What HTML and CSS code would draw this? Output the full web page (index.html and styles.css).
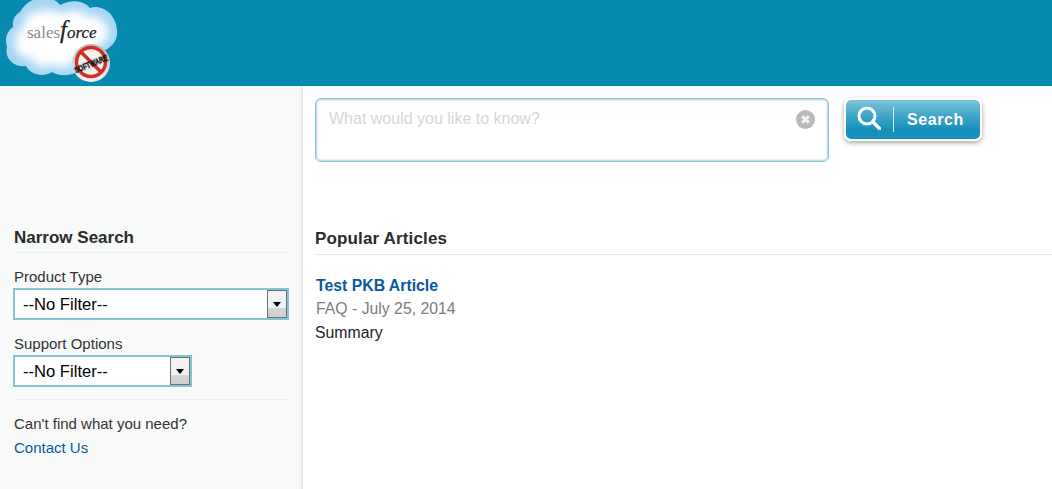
FILE: index.html
```html
<!DOCTYPE html>
<html lang="en">
<head>
    <meta charset="UTF-8">
    <title>Knowledge Search</title>
    <link rel="stylesheet" href="styles.css">
</head>
<body>

<header class="top">
    <svg class="logo" width="124" height="86" viewBox="0 0 124 86" xmlns="http://www.w3.org/2000/svg">
        <defs>
            <filter id="soft" x="-20%" y="-20%" width="140%" height="140%">
                <feGaussianBlur stdDeviation="4"/>
            </filter>
            <filter id="smudge" x="-10%" y="-30%" width="120%" height="160%">
                <feGaussianBlur stdDeviation="0.35"/>
            </filter>
            <clipPath id="cloudClip">
                <path d="M20 12C30 -6 52 -6 60 5C70 -1 84 0 90 8C102 4 116 14 117 30C118 40 112 47 105 50C104 60 96 66 85 64C78 76 62 78 52 72C42 78 30 74 26 66C14 68 4 58 7 47C4 38 8 30 13 27C12 20 15 15 20 12Z"/>
            </clipPath>
            <linearGradient id="badge" x1="0" y1="0" x2="0" y2="1">
                <stop offset="0" stop-color="#bdb8b1"/>
                <stop offset="1" stop-color="#f3f1ee"/>
            </linearGradient>
        </defs>
        <g clip-path="url(#cloudClip)">
            <rect width="124" height="86" fill="#a6d6f2"/>
            <path d="M24 20C34 8 52 8 62 14C70 9 82 9 88 17C98 14 108 22 108 33C108 41 102 44 97 45C95 54 86 58 78 56C72 68 60 70 52 64C44 70 34 66 32 58C22 60 14 52 16 44C13 36 18 30 24 28Z" fill="#fff" filter="url(#soft)"/>
        </g>
        <text class="logo-name" x="27" y="38"><tspan class="logo-sales">sales</tspan><tspan class="logo-f">f</tspan><tspan class="logo-force">orce</tspan></text>
        <circle cx="91" cy="63" r="19" fill="url(#badge)"/>
        <circle cx="91" cy="62" r="14.5" fill="#f4f1ee" stroke="#cf2f28" stroke-width="3.4"/>
        <path d="M81 52L101 72" stroke="#cf2f28" stroke-width="3.4"/>
        <text class="logo-soft" x="91" y="67" textLength="35" lengthAdjust="spacingAndGlyphs" transform="rotate(-22 91 64)" filter="url(#smudge)">SOFTWARE</text>
    </svg>
</header>

<div class="page">
    <aside class="side">
        <h2 class="side-title">Narrow Search</h2>

        <div class="field">
            <label class="field-label" for="productType">Product Type</label>
            <div class="select select-wide">
                <select id="productType"><option>--No Filter--</option></select>
                <span class="select-btn"><i></i></span>
            </div>
        </div>

        <div class="field">
            <label class="field-label" for="supportOptions">Support Options</label>
            <div class="select select-small">
                <select id="supportOptions"><option>--No Filter--</option></select>
                <span class="select-btn"><i></i></span>
            </div>
        </div>

        <div class="contact">
            <p>Can't find what you need?</p>
            <a href="#">Contact Us</a>
        </div>
    </aside>

    <main class="content">
        <div class="search-row">
            <div class="search-box">
                <span class="placeholder">What would you like to know?</span>
                <span class="clear">
                    <svg width="19" height="19" viewBox="0 0 19 19">
                        <circle cx="9.5" cy="9.5" r="9.5" fill="#bababa"/>
                        <path d="M6.3 6.3L12.7 12.7M12.7 6.3L6.3 12.7" stroke="#f4f4f4" stroke-width="3"/>
                    </svg>
                </span>
            </div>
            <button class="search-btn" type="button">
                <svg class="search-icon" width="24" height="24" viewBox="0 0 24 24">
                    <circle cx="10" cy="10" r="8" fill="none" stroke="#fff" stroke-width="3"/>
                    <path d="M16 16L22.5 22.5" stroke="#fff" stroke-width="3.6" stroke-linecap="round"/>
                </svg>
                <span class="search-sep"></span>
                <span class="search-label">Search</span>
            </button>
        </div>

        <h2 class="section-title">Popular Articles</h2>

        <article class="article">
            <a class="article-title" href="#">Test PKB Article</a>
            <p class="article-meta">FAQ - July 25, 2014</p>
            <p class="article-summary">Summary</p>
        </article>
    </main>
</div>

</body>
</html>
```

FILE: styles.css
```css
html, body {
    height: 100%;
}

body {
    margin: 0;
    padding: 0;
    background-color: #fff;
    font-family: "Liberation Sans", Arial, sans-serif;
    color: #222;
    overflow: hidden;
}

h2, p {
    margin: 0;
    padding: 0;
}

a {
    color: #0b57a0;
    text-decoration: none;
}

.top {
    height: 86px;
    background-color: #068ab0;
    overflow: hidden;
}

.logo {
    display: block;
}

.logo-name {
    font-family: "Liberation Serif", serif;
    font-size: 17px;
}

.logo-sales {
    fill: #8b8b8b;
}

.logo-force, .logo-f {
    font-style: italic;
    fill: #222;
    stroke: #222;
    stroke-width: 0.25px;
}

.logo-f {
    font-size: 25px;
}

.logo-soft {
    font-family: "Liberation Sans", sans-serif;
    font-size: 9px;
    font-weight: bold;
    text-anchor: middle;
    fill: #111;
    stroke: #111;
    stroke-width: 0.5px;
}

.page {
    display: flex;
    height: 403px;
}

.side {
    box-sizing: border-box;
    width: 303px;
    padding: 143px 14px 0 13px;
    background-color: #f8faf9;
    border-right: 2px solid #e8eaea;
}

.side-title {
    height: 23px;
    padding-left: 1px;
    font-size: 17px;
    line-height: 18px;
    font-weight: bold;
    color: #2b2b2b;
    border-bottom: 1px solid #ecefee;
}

.field {
    margin-top: 15px;
}

.field-label {
    display: block;
    height: 20px;
    padding-left: 1px;
    font-size: 15px;
    line-height: 18px;
    color: #333;
}

.select {
    position: relative;
    box-sizing: border-box;
    height: 32px;
    border: 2px solid #87c3d6;
    background-color: #fff;
}

.select-wide {
    width: 276px;
}

.select-small {
    width: 179px;
}

.select select {
    display: block;
    width: 100%;
    height: 100%;
    padding: 0 0 0 8px;
    border: 0;
    background: transparent;
    appearance: none;
    font-family: "Liberation Sans", Arial, sans-serif;
    font-size: 16.6px;
    color: #000;
}

.select-btn {
    position: absolute;
    top: 0;
    right: 0;
    bottom: 0;
    width: 20px;
    box-sizing: border-box;
    border: 1px solid #6f6f6f;
    background: linear-gradient(#f4f4f4 0, #f0f0f0 65%, #d6d6d6 65%, #cfcfcf 100%);
    display: flex;
    justify-content: center;
    padding-top: 11px;
}

.select-btn i {
    display: block;
    width: 0;
    height: 0;
    border-left: 4.5px solid transparent;
    border-right: 4.5px solid transparent;
    border-top: 5px solid #000;
}

.contact {
    margin-top: 12px;
    padding-top: 12px;
    padding-left: 1px;
    border-top: 1px solid #ecefee;
    font-size: 15px;
    line-height: 24px;
    color: #333;
}

.content {
    flex: 1;
    min-width: 0;
    padding: 12px 0 0 12px;
}

.search-row {
    display: flex;
    gap: 15px;
    height: 131px;
}

.search-box {
    position: relative;
    box-sizing: border-box;
    width: 514px;
    height: 64px;
    padding: 11px 13px;
    border: 1px solid #86c8de;
    border-radius: 6px;
    background-color: #fff;
    box-shadow: inset 0 0 2px 1px rgba(120, 170, 190, 0.55);
    font-size: 16px;
    line-height: 18px;
}

.placeholder {
    color: #d6d6d6;
}

.clear {
    position: absolute;
    top: 11px;
    right: 13px;
    line-height: 0;
}

.search-btn {
    display: flex;
    align-items: center;
    box-sizing: border-box;
    width: 138px;
    height: 43px;
    padding: 0;
    border: 2px solid #fff;
    border-radius: 7px;
    background: linear-gradient(#7cc4dc 0, #3aa3c6 45%, #1591bb 75%, #1591bb 100%);
    box-shadow: 0 2px 5px rgba(0, 0, 0, 0.35);
    color: #fff;
    font-family: "Liberation Sans", Arial, sans-serif;
}

.search-icon {
    margin-left: 11px;
    margin-top: -4px;
}

.search-sep {
    width: 1px;
    height: 25px;
    margin-left: 12px;
    background-color: #d4eef6;
}

.search-label {
    margin-left: 13px;
    margin-top: 1px;
    font-size: 16px;
    font-weight: bold;
    letter-spacing: 0.6px;
}

.section-title {
    box-sizing: border-box;
    height: 26px;
    font-size: 17px;
    line-height: 20px;
    letter-spacing: 0.15px;
    font-weight: bold;
    color: #2b2b2b;
    border-bottom: 1px solid #e8eaea;
}

.article {
    padding: 19px 0 0 1px;
    font-size: 15.8px;
    line-height: 24px;
}

.article-title {
    display: block;
    font-weight: bold;
    line-height: 23px;
}

.article-meta {
    color: #7b7b82;
}

.article-summary {
    margin-left: -1px;
    color: #222;
}
```
